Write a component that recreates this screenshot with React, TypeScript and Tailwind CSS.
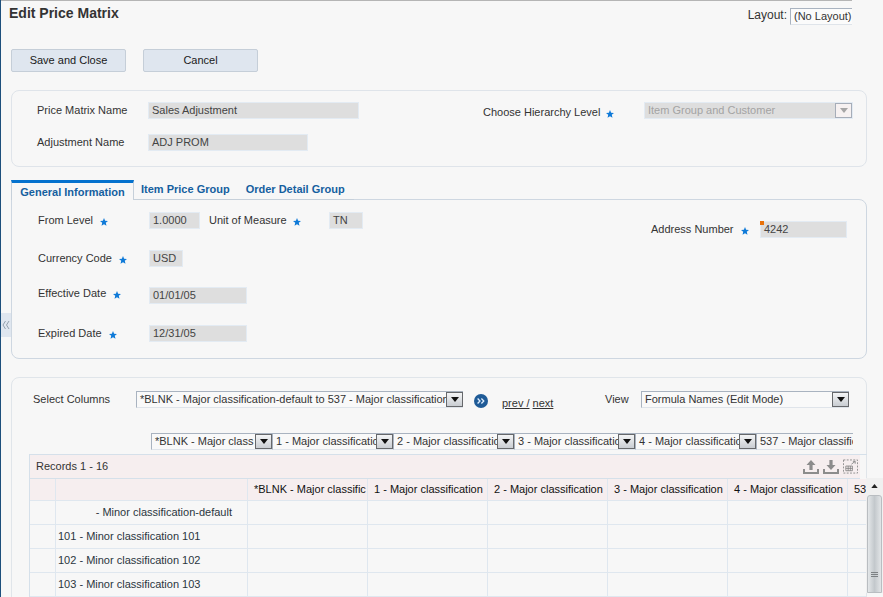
import React from "react";

function Star({ className = "" }: { className?: string }) {
  return (
    <svg viewBox="0 0 10 10" className={"inline-block w-[8px] h-[8px] shrink-0 " + className}>
      <polygon points="5,0 6.4,3.3 10,3.6 7.2,6 8.1,9.6 5,7.7 1.9,9.6 2.8,6 0,3.6 3.6,3.3" fill="#0f7ad8" />
    </svg>
  );
}

function Field({ value, w, className = "" }: { value: string; w: string; className?: string }) {
  return (
    <div className={"h-[17px] bg-[#dedede] border border-[#e3ebf3] pl-[3px] leading-[14px] text-[#444] whitespace-nowrap " + w + " " + className}>
      {value}
    </div>
  );
}

function Caret() {
  return (
    <div className="w-[17px] h-[15px] shrink-0 border border-[#66686b] bg-gradient-to-b from-[#f4f5f6] to-[#c9cdd2] flex items-center justify-center">
      <svg viewBox="0 0 8 5" className="w-[8px] h-[5px]"><polygon points="0,0 8,0 4,5" fill="#111" /></svg>
    </div>
  );
}

function Select({ value, w, className = "" }: { value: string; w: string; className?: string }) {
  return (
    <div className={"h-[17px] flex items-start border-l border-t border-[#a9b3c0] border-b-[#dfe4ea] border-b bg-[#f9f9f9] " + w + " " + className}>
      <div className="flex-1 min-w-0 overflow-hidden whitespace-nowrap pl-[3px] leading-[15px] text-[#333]">{value}</div>
      <Caret />
    </div>
  );
}

function Cell({ children, className = "" }: { children?: React.ReactNode; className?: string }) {
  return (
    <div className={"border-r border-b border-[#dfe7ef] overflow-hidden whitespace-nowrap " + className}>{children}</div>
  );
}

const HEAD = ["*BLNK - Major classific", "1 - Major classification", "2 - Major classification", "3 - Major classification", "4 - Major classification", "53"];
const ROWS = ["- Minor classification-default", "101 - Minor classification 101", "102 - Minor classification 102", "103 - Minor classification 103"];
const PICKS = ["*BLNK - Major class", "1 - Major classification", "2 - Major classification", "3 - Major classification", "4 - Major classification"];
const GRID = "grid grid-cols-[26px_192px_120px_120px_120px_120px_120px_19px]";

export default function App() {
  return (
    <div className="relative w-[883px] h-[597px] overflow-hidden bg-[#f7f7f7] border-l border-[#1d4f7c] text-[11px] text-[#333]" style={{ fontFamily: '"Liberation Sans", Arial, sans-serif' }}>
      <div className="w-[851px] h-px bg-[#b5b5b5]" />

      <div className="flex items-start justify-between w-[851px] h-[48px]">
        <div className="ml-[8px] mt-[4px] text-[14px] leading-[16px] font-bold text-[#333]">Edit Price Matrix</div>
        <div className="flex items-start mt-[7px]">
          <span className="text-[12px] leading-[14px] mr-[3px]">Layout:</span>
          <div className="w-[62px] h-[17px] border-l border-t border-b border-l-[#a9b3c0] border-t-[#a9b3c0] border-b-[#dfe4ea] bg-[#fbfbfb] pl-[3px] leading-[15px] whitespace-nowrap overflow-hidden">(No Layout)</div>
        </div>
      </div>

      <div className="flex ml-[10px] gap-[17px]">
        <button className="w-[115px] h-[23px] bg-[#dfe6ef] border border-[#c5ced8] rounded-[2px] text-[#1a1a1a] text-[11px] leading-[18px] pb-[2px]">Save and Close</button>
        <button className="w-[115px] h-[23px] bg-[#dfe6ef] border border-[#c5ced8] rounded-[2px] text-[#1a1a1a] text-[11px] leading-[18px] pb-[2px]">Cancel</button>
      </div>

      <section className="ml-[10px] mt-[18px] w-[856px] h-[77px] border border-[#dfe4ea] rounded-[8px] pt-[11px] flex">
        <div className="w-[471px]">
          <div className="flex items-start h-[17px]">
            <span className="ml-[25px] w-[111px] leading-[17px]">Price Matrix Name</span>
            <Field value="Sales Adjustment" w="w-[211px]" />
          </div>
          <div className="flex items-start h-[17px] mt-[15px]">
            <span className="ml-[25px] w-[111px] leading-[17px]">Adjustment Name</span>
            <Field value="ADJ PROM" w="w-[160px]" />
          </div>
        </div>
        <div className="flex items-start">
          <div className="w-[161px] flex items-center mt-[2px] h-[17px]">
            <span>Choose Hierarchy Level</span>
            <Star className="ml-[6px] mt-[2px]" />
          </div>
          <div className="w-[209px] h-[17px] bg-[#dedede] border border-[#e3ebf3] flex items-start justify-between pl-[3px] leading-[14px] text-[#a3a3a3] whitespace-nowrap">
            Item Group and Customer
            <div className="w-[17px] h-[15px] border border-[#a6adb8] bg-[#f6f1f1] flex items-center justify-center">
              <svg viewBox="0 0 8 5" className="w-[8px] h-[5px]"><polygon points="0,0 8,0 4,5" fill="#a6a6a6" /></svg>
            </div>
          </div>
        </div>
      </section>

      <nav className="ml-[10px] mt-[13px] flex items-start h-[20px] w-[343px] relative z-10">
        <div className="w-[123px] h-[20px] bg-[#f7f7f7] border-t-[3px] border-t-[#0572ce] border-r border-l border-[#c6d0da] text-center font-bold text-[#15609f] leading-[16px] pt-[1px]">General Information</div>
        <div className="flex-1 h-[20px] border-b border-[#c6d0da] flex font-bold text-[#15609f] leading-[18px]">
          <span className="ml-[7px]">Item Price Group</span>
          <span className="ml-[16px]">Order Detail Group</span>
        </div>
      </nav>

      <section className="relative ml-[10px] -mt-px w-[856px] h-[160px] border border-[#ced7e1] rounded-[8px] rounded-tl-none flex pt-[12px]">
        <div className="w-[631px]">
          <div className="flex items-start h-[17px]">
            <div className="w-[137px] pl-[26px] flex items-center h-[17px]"><span>From Level</span><Star className="ml-[7px] mt-[2px]" /></div>
            <Field value="1.0000" w="w-[51px]" />
            <div className="w-[120px] ml-[9px] flex items-center h-[17px]"><span>Unit of Measure</span><Star className="ml-[6px] mt-[2px]" /></div>
            <Field value="TN" w="w-[34px]" />
          </div>
          <div className="flex items-start h-[17px] mt-[21px]">
            <div className="w-[137px] pl-[26px] flex items-center h-[17px]"><span>Currency Code</span><Star className="ml-[7px] mt-[2px]" /></div>
            <Field value="USD" w="w-[34px]" />
          </div>
          <div className="flex items-start h-[17px] mt-[20px]">
            <div className="w-[137px] pl-[26px] flex items-center h-[13px]"><span>Effective Date</span><Star className="ml-[7px] mt-[2px]" /></div>
            <Field value="01/01/05" w="w-[98px]" />
          </div>
          <div className="flex items-start h-[17px] mt-[21px]">
            <div className="w-[137px] pl-[26px] flex items-center h-[17px]"><span>Expired Date</span><Star className="ml-[7px] mt-[2px]" /></div>
            <Field value="12/31/05" w="w-[98px]" />
          </div>
        </div>
        <div className="flex items-start mt-[9px]">
          <div className="w-[109px] ml-[8px] flex items-center h-[17px]"><span>Address Number</span><Star className="ml-[7px] mt-[2px]" /></div>
          <div className="relative">
            <Field value="4242" w="w-[87px]" />
            <div className="absolute left-0 top-0 w-[4px] h-[4px] bg-[#e8710a]" />
          </div>
        </div>
      </section>

      <div className="absolute left-0 top-[313px] w-[10px] h-[24px] bg-[#dfe6ef] flex items-center justify-center">
        <svg viewBox="0 0 8 10" className="w-[8px] h-[10px]">
          <path d="M3.5 1 1 5 3.5 9M7 1 4.5 5 7 9" stroke="#8a97a6" strokeWidth="0.9" fill="none" />
        </svg>
      </div>

      <section className="relative ml-[10px] mt-[18px] w-[856px] h-[260px] border border-[#e0e5ea] rounded-[8px] pt-[13px]">
        <div className="flex items-start h-[17px]">
          <span className="ml-[21px] w-[103px] leading-[17px]">Select Columns</span>
          <Select value="*BLNK - Major classification-default to 537 - Major classification 537" w="w-[327px]" />
          <svg viewBox="0 0 14 14" className="w-[14px] h-[14px] ml-[11px] mt-[3px] shrink-0">
            <circle cx="7" cy="7" r="7" fill="#1f5b97" />
            <path d="M3.6 4.5 6 7 3.6 9.5M7.4 4.5 9.8 7 7.4 9.5" stroke="#dfeeff" strokeWidth="1.3" fill="none" />
          </svg>
          <div className="ml-[14px] mt-[5px] w-[103px] leading-[14px] text-[#333] whitespace-nowrap"><span className="underline">prev /</span> <span className="underline">next</span></div>
          <span className="w-[36px] leading-[17px]">View</span>
          <Select value="Formula Names (Edit Mode)" w="w-[208px]" />
        </div>

        <div className="flex items-start ml-[139px] mt-[25px] w-[702px] overflow-hidden">
          {PICKS.map((p) => <Select key={p} value={p} w="w-[121px] shrink-0" />)}
          <div className="flex-1 min-w-0 h-[17px] border-l border-t border-b border-l-[#a9b3c0] border-t-[#a9b3c0] border-b-[#dfe4ea] pl-[3px] leading-[15px] whitespace-nowrap overflow-hidden">537 - Major classification 537</div>
        </div>

        <div className="ml-[17px] mt-[4px] w-[838px] border-l border-t border-[#d5e0ea]">
          <div className="h-[24px] w-[830px] bg-[#f6eeef] border-b border-[#d5e0ea] flex items-center justify-between pl-[6px] pr-[2px]">
            <span className="text-[#333]">Records 1 - 16</span>
            <div className="flex items-center gap-[4px] text-[#888]">
              <svg viewBox="0 0 16 14" className="w-[16px] h-[14px]">
                <path d="M8 0 12.5 5H9.6V10H6.4V5H3.5ZM0 9H2V12H14V9H16V14H0Z" fill="#8c8c8c" />
              </svg>
              <svg viewBox="0 0 16 14" className="w-[16px] h-[14px]">
                <path d="M6.4 0H9.6V5H12.5L8 10 3.5 5H6.4ZM0 9H2V12H14V9H16V14H0Z" fill="#8c8c8c" />
              </svg>
              <svg viewBox="0 0 16 15" className="w-[15px] h-[15px]">
                <rect x="0.5" y="0.5" width="15" height="14" fill="none" stroke="#8c8c8c" strokeDasharray="2 1.5" />
                <path d="M9 5 13 2M10.5 2H13V4.5" stroke="#8c8c8c" fill="none" />
                <path d="M3 7H10V12H3ZM3 9.5H10M5.5 7V12M7.8 7V12" stroke="#777" fill="none" strokeWidth="0.8" />
              </svg>
            </div>
          </div>
          <div className="w-[836px] overflow-hidden">
            <div className={GRID + " h-[22px] bg-[#f6eeef] text-[#111] leading-[21px]"}>
              <Cell />
              <Cell />
              {HEAD.map((h) => <Cell key={h} className="pl-[6px]">{h}</Cell>)}
            </div>
            {ROWS.map((r, i) => (
              <div key={r} className={GRID + " h-[24px] text-[#2b3640] leading-[23px]"}>
                <Cell />
                <Cell className={i === 0 ? "text-right pr-[15px]" : "pl-[2px]"}>{r}</Cell>
                <Cell /><Cell /><Cell /><Cell /><Cell /><Cell />
              </div>
            ))}
          </div>
        </div>

        <div className="absolute left-[854px] top-[100px] w-[17px] h-[115px] bg-[#f0f0f0] flex flex-col items-center">
          <svg viewBox="0 0 8 5" className="w-[7px] h-[4px] mt-[6px]"><polygon points="4,0 8,5 0,5" fill="#222" /></svg>
          <div className="mt-[7px] w-[15px] flex-1 border border-[#b9bdc1] bg-gradient-to-r from-[#e4e7e9] via-[#c3c8cc] to-[#e2e5e7] rounded-t-[3px] flex flex-col items-center justify-end pb-[15px] gap-[1px]">
            <div className="w-[7px] h-px bg-[#7d8184]" />
            <div className="w-[7px] h-px bg-[#7d8184]" />
            <div className="w-[7px] h-px bg-[#7d8184]" />
          </div>
        </div>
      </section>
    </div>
  );
}
